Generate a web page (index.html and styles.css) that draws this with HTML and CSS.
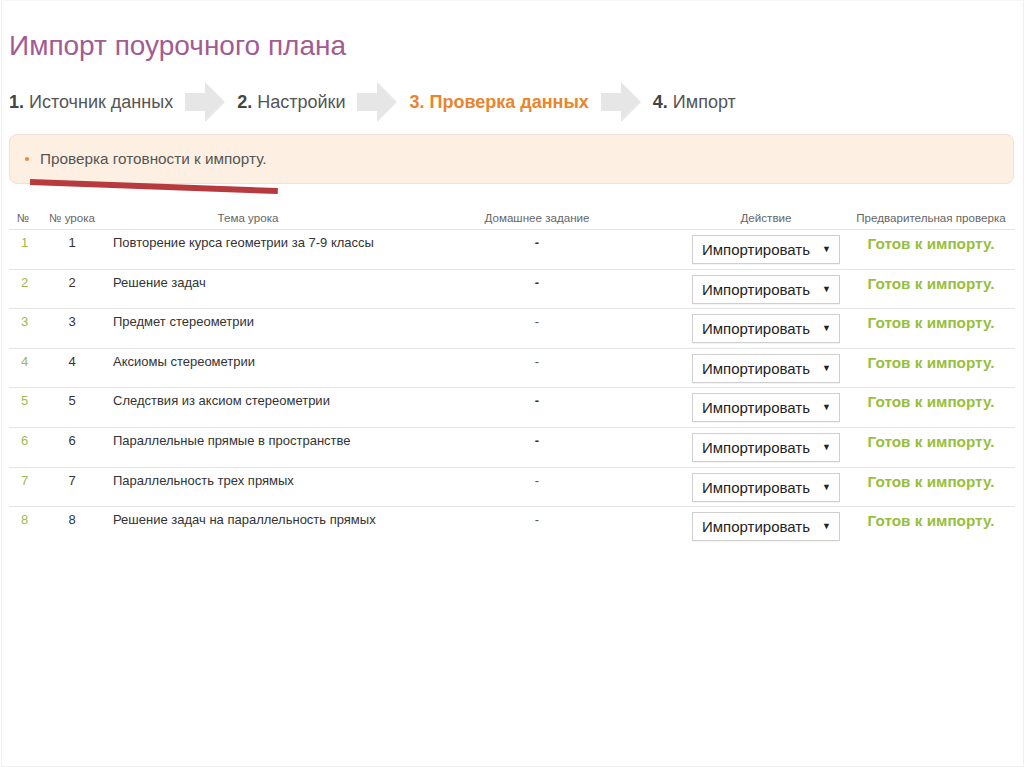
FILE: index.html
```html
<!DOCTYPE html>
<html lang="ru">
<head>
<meta charset="utf-8">
<link rel="stylesheet" href="styles.css">
</head>
<body>
<div class="slide">
  <h1 class="title">Импорт поурочного плана</h1>

  <div class="steps">
    <div class="step"><b>1.</b> Источник данных</div>
    <svg class="arrow" width="40" height="40" viewBox="0 0 40 40"><polygon points="0,11 20,11 20,0 40,20 20,40 20,29 0,29"/></svg>
    <div class="step"><b>2.</b> Настройки</div>
    <svg class="arrow" width="40" height="40" viewBox="0 0 40 40"><polygon points="0,11 20,11 20,0 40,20 20,40 20,29 0,29"/></svg>
    <div class="step active">3. Проверка данных</div>
    <svg class="arrow" width="40" height="40" viewBox="0 0 40 40"><polygon points="0,11 20,11 20,0 40,20 20,40 20,29 0,29"/></svg>
    <div class="step"><b>4.</b> Импорт</div>
  </div>

  <div class="alert">
    <div class="alert-item">Проверка готовности к импорту.</div>
    <div class="underline"></div>
  </div>

  <table class="grid">
    <colgroup>
      <col class="c1"><col class="c2"><col class="c3"><col class="c4"><col class="c5"><col class="c6">
    </colgroup>
    <thead>
      <tr>
        <th>№</th><th>№ урока</th><th>Тема урока</th><th>Домашнее задание</th><th>Действие</th><th>Предварительная проверка</th>
      </tr>
    </thead>
    <tbody>
      <tr><td class="idx">1</td><td class="num">1</td><td class="topic">Повторение курса геометрии за 7-9 классы</td><td class="hw">-</td><td class="act"><div class="sel">Импортировать<span class="caret">▼</span></div></td><td class="ok">Готов к импорту.</td></tr>
      <tr><td class="idx">2</td><td class="num">2</td><td class="topic">Решение задач</td><td class="hw">-</td><td class="act"><div class="sel">Импортировать<span class="caret">▼</span></div></td><td class="ok">Готов к импорту.</td></tr>
      <tr><td class="idx">3</td><td class="num">3</td><td class="topic">Предмет стереометрии</td><td class="hw light">-</td><td class="act"><div class="sel">Импортировать<span class="caret">▼</span></div></td><td class="ok">Готов к импорту.</td></tr>
      <tr><td class="idx">4</td><td class="num">4</td><td class="topic">Аксиомы стереометрии</td><td class="hw light">-</td><td class="act"><div class="sel">Импортировать<span class="caret">▼</span></div></td><td class="ok">Готов к импорту.</td></tr>
      <tr><td class="idx">5</td><td class="num">5</td><td class="topic">Следствия из аксиом стереометрии</td><td class="hw">-</td><td class="act"><div class="sel">Импортировать<span class="caret">▼</span></div></td><td class="ok">Готов к импорту.</td></tr>
      <tr><td class="idx">6</td><td class="num">6</td><td class="topic">Параллельные прямые в пространстве</td><td class="hw">-</td><td class="act"><div class="sel">Импортировать<span class="caret">▼</span></div></td><td class="ok">Готов к импорту.</td></tr>
      <tr><td class="idx">7</td><td class="num">7</td><td class="topic">Параллельность трех прямых</td><td class="hw light">-</td><td class="act"><div class="sel">Импортировать<span class="caret">▼</span></div></td><td class="ok">Готов к импорту.</td></tr>
      <tr class="last"><td class="idx">8</td><td class="num">8</td><td class="topic">Решение задач на параллельность прямых</td><td class="hw light">-</td><td class="act"><div class="sel">Импортировать<span class="caret">▼</span></div></td><td class="ok">Готов к импорту.</td></tr>
    </tbody>
  </table>
</div>
</body>
</html>
```

FILE: styles.css
```css
html, body {
  margin: 0;
  padding: 0;
  background: #ffffff;
}

.slide {
  box-sizing: border-box;
  width: 1023px;
  height: 767px;
  margin-left: 1px;
  border: 1px solid #f0f0f0;
  border-top-color: #f7f7f7;
  padding: 0 0 0 7px;
  font-family: "Liberation Sans", Arial, sans-serif;
  color: #333;
}

.title {
  margin: 0;
  padding-top: 28px;
  font-size: 28px;
  line-height: 34px;
  font-weight: normal;
  color: #a35b93;
}

.steps {
  display: flex;
  align-items: center;
  gap: 12px;
  margin-top: 19px;
  height: 40px;
}

.step {
  font-size: 18px;
  color: #555;
  white-space: nowrap;
}

.step b {
  color: #444;
}

.step.active {
  color: #e9852d;
  font-weight: bold;
}

.arrow {
  fill: #e6e6e6;
  flex: none;
}

.alert {
  position: relative;
  box-sizing: border-box;
  width: 1005px;
  height: 50px;
  margin-top: 12px;
  background: #fdf0e2;
  border: 1px solid #efe2d3;
  border-radius: 8px;
  display: flex;
  align-items: center;
  padding-left: 30px;
}

.alert-item {
  position: relative;
  font-size: 15.3px;
  color: #555;
}

.alert-item::before {
  content: "";
  position: absolute;
  left: -15px;
  top: 7px;
  width: 4px;
  height: 4px;
  border-radius: 50%;
  background: #ec8a2f;
}

.underline {
  position: absolute;
  left: 20px;
  top: 44px;
  width: 248px;
  height: 6px;
  background: #b73a3e;
  transform: rotate(2.1deg);
  transform-origin: left center;
}

.grid {
  margin-top: 23px;
  width: 1006px;
  border-collapse: collapse;
  table-layout: fixed;
}

.c1 { width: 28px; }
.c2 { width: 70px; }
.c3 { width: 282px; }
.c4 { width: 296px; }
.c5 { width: 162px; }
.c6 { width: 168px; }

.grid th {
  font-size: 11.6px;
  font-weight: normal;
  color: #666;
  text-align: center;
  padding: 0 0 5px 0;
  height: 17px;
  vertical-align: bottom;
  border-bottom: 1px solid #e4e4e4;
  white-space: nowrap;
}

.grid td {
  height: 33.6px;
  padding: 5px 0 0 0;
  vertical-align: top;
  border-bottom: 1px solid #e4e4e4;
  font-size: 13px;
}

.grid tr.last td {
  border-bottom: none;
}

.grid td.idx {
  text-align: center;
  color: #9fb651;
  padding-left: 3px;
}

.grid td.num {
  text-align: center;
  color: #333;
}

.grid td.topic {
  padding-left: 6px;
  color: #333;
  white-space: nowrap;
}

.grid td.hw {
  text-align: center;
  color: #333;
  font-weight: bold;
}

.grid td.hw.light {
  font-weight: normal;
  color: #555;
}

.sel {
  box-sizing: border-box;
  width: 148px;
  height: 29px;
  margin: 0 auto;
  border: 1px solid #cfcfcf;
  background: #fff;
  font-size: 15px;
  line-height: 27px;
  color: #222;
  padding-left: 9px;
  display: flex;
  align-items: center;
  box-shadow: 0 1px 1px rgba(0,0,0,0.04);
}

.caret {
  font-size: 9px;
  margin-left: auto;
  margin-right: 8px;
  color: #222;
}

.grid td.ok {
  text-align: center;
  font-size: 15.3px;
  font-weight: bold;
  color: #97bf3b;
  white-space: nowrap;
}
```
